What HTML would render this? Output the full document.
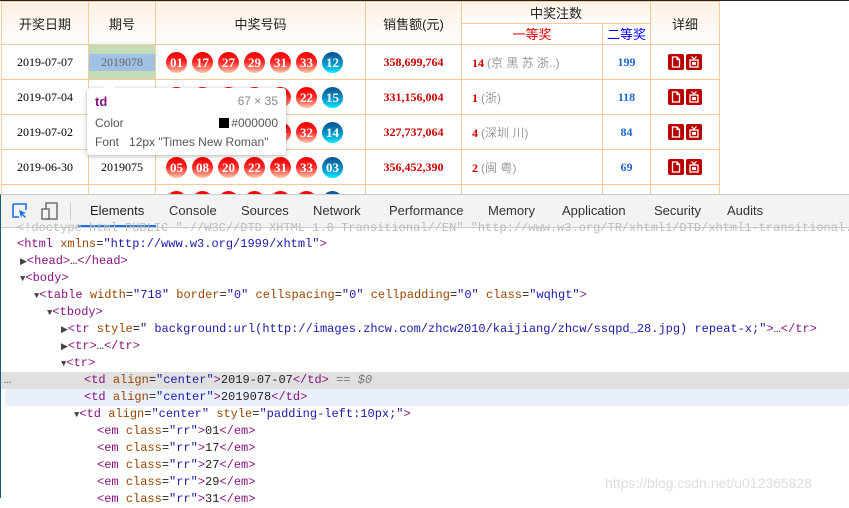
<!DOCTYPE html>
<html><head><meta charset="utf-8"><style>
body{margin:0;width:849px;height:498px;overflow:hidden;background:#fff;position:relative;font-family:"Liberation Sans","Noto Sans CJK SC",sans-serif}
.top{position:absolute;left:0;top:0;width:849px;height:194px;overflow:hidden;border-top:1px solid #222;box-sizing:border-box}
table{border-collapse:collapse;table-layout:fixed;position:absolute;left:1px;top:0;width:718px}
td{border:1px solid #f9c99a;text-align:center;font-family:"Liberation Serif","Noto Serif CJK SC",serif;font-size:12px;height:34px;padding:0;white-space:nowrap}
th{border:1px solid #f9c99a;font-weight:normal;font-size:13px;color:#222;background:linear-gradient(#fdf0e3,#fff);font-family:"Liberation Sans","Noto Sans CJK SC",sans-serif;padding:0}
.b{display:inline-block;width:21px;height:21px;border-radius:50%;color:#fff;font-weight:bold;font-size:13px;line-height:21px;text-align:center;margin-right:5px;vertical-align:middle;font-family:"Liberation Serif",serif}
.r{background:linear-gradient(#e00,#f22 45%,#f87 80%,#fca)}
.u{background:linear-gradient(#0a4f8f,#08a8d8 70%,#0ef)}
.sale{color:#c00;font-weight:bold}
.n1{color:#c00;font-weight:bold}
.g{color:#999;font-family:"Liberation Sans","Noto Sans CJK SC",sans-serif;font-size:12px}
.n2{color:#2266cc;font-weight:bold}
.ic{display:inline-block;width:16px;height:16px;margin:0 1px;vertical-align:middle}
.tip{position:absolute;left:87px;top:87px;width:199px;height:67px;background:#fff;border-radius:3px;box-shadow:0 1px 5px rgba(0,0,0,.3);font-size:12px;color:#555}
.tip:before{content:"";position:absolute;left:16px;top:-6px;border:6px solid transparent;border-top:0;border-bottom-color:#fff}
.dt{position:absolute;left:0;top:194px;width:849px;height:304px;border-top:1px solid #ccc;border-left:1px solid #1a5a7a;box-sizing:border-box}
.bar{height:32px;background:#f3f3f3;border-bottom:1px solid #ccc;position:relative;font-size:13px;color:#333}
.tab{position:absolute;top:8px}
.code{font-family:"Liberation Mono",monospace;font-size:12px;line-height:17px;color:#222;position:relative}
.ln{position:absolute;white-space:pre;height:17px}
.tg{color:#881280}.at{color:#994500}.av{color:#1a1aa6}.tr{color:#444;font-size:9px}
</style></head><body>
<svg width="0" height="0" style="position:absolute"><defs>
<symbol id="doc" viewBox="0 0 16 16"><rect width="16" height="16" rx="2" fill="#b80000"/><path d="M4.5 3h4.5l2.5 2.5V13h-7z M9 3v2.5h2.5" fill="none" stroke="#fff" stroke-width="1.3"/></symbol>
<symbol id="tv" viewBox="0 0 16 16"><rect width="16" height="16" rx="2" fill="#b80000"/><path d="M5.5 2.5l2.5 2.5 2.5-2.5" fill="none" stroke="#fff" stroke-width="1.2"/><rect x="4" y="6" width="8" height="7" fill="none" stroke="#fff" stroke-width="1.3"/><rect x="6" y="8" width="4" height="3" fill="#fff"/></symbol>
</defs></svg>
<div class="top">
<table>
<colgroup><col style="width:87px"><col style="width:67px"><col style="width:210px"><col style="width:96px"><col style="width:141px"><col style="width:48px"><col style="width:69px"></colgroup>
<tr style="height:21px"><th rowspan="2" style="height:42px">开奖日期</th><th rowspan="2">期号</th><th rowspan="2">中奖号码</th><th rowspan="2">销售额(元)</th><th colspan="2">中奖注数</th><th rowspan="2">详细</th></tr>
<tr style="height:21px"><th style="color:#e00;background:#fff">一等奖</th><th style="color:#00f;background:#fff">二等奖</th></tr>
<tr><td>2019-07-07</td><td style="background:#c3ddb8"><div style="background:#9fc1e3;color:#666;height:17px;line-height:17px">2019078</div></td><td style="text-align:left;padding-left:10px"><span class="b r">01</span><span class="b r">17</span><span class="b r">27</span><span class="b r">29</span><span class="b r">31</span><span class="b r">33</span><span class="b u">12</span></td><td class="sale">358,699,764</td><td style="text-align:left;padding-left:10px"><span class="n1">14</span> <span class="g">(京 黑 苏 浙..)</span></td><td class="n2">199</td><td><svg class="ic"><use href="#doc"/></svg><svg class="ic"><use href="#tv"/></svg></td></tr>
<tr><td>2019-07-04</td><td>2019077</td><td style="text-align:left;padding-left:10px"><span class="b r">03</span><span class="b r">06</span><span class="b r">09</span><span class="b r">11</span><span class="b r">19</span><span class="b r">22</span><span class="b u">15</span></td><td class="sale">331,156,004</td><td style="text-align:left;padding-left:10px"><span class="n1">1</span> <span class="g">(浙)</span></td><td class="n2">118</td><td><svg class="ic"><use href="#doc"/></svg><svg class="ic"><use href="#tv"/></svg></td></tr>
<tr><td>2019-07-02</td><td>2019076</td><td style="text-align:left;padding-left:10px"><span class="b r">02</span><span class="b r">05</span><span class="b r">10</span><span class="b r">14</span><span class="b r">26</span><span class="b r">32</span><span class="b u">14</span></td><td class="sale">327,737,064</td><td style="text-align:left;padding-left:10px"><span class="n1">4</span> <span class="g">(深圳 川)</span></td><td class="n2">84</td><td><svg class="ic"><use href="#doc"/></svg><svg class="ic"><use href="#tv"/></svg></td></tr>
<tr><td>2019-06-30</td><td>2019075</td><td style="text-align:left;padding-left:10px"><span class="b r">05</span><span class="b r">08</span><span class="b r">20</span><span class="b r">22</span><span class="b r">31</span><span class="b r">33</span><span class="b u">03</span></td><td class="sale">356,452,390</td><td style="text-align:left;padding-left:10px"><span class="n1">2</span> <span class="g">(闽 粤)</span></td><td class="n2">69</td><td><svg class="ic"><use href="#doc"/></svg><svg class="ic"><use href="#tv"/></svg></td></tr>
<tr><td></td><td></td><td style="text-align:left;padding-left:10px;vertical-align:top;padding-top:6px"><span class="b r"></span><span class="b r"></span><span class="b r"></span><span class="b r"></span><span class="b r"></span><span class="b r"></span><span class="b u"></span></td><td></td><td></td><td></td><td style="vertical-align:top;padding-top:9px"><svg class="ic"><use href="#doc"/></svg><svg class="ic"><use href="#tv"/></svg></td></tr>
</table>
<div class="tip">
<div style="position:absolute;left:8px;top:6px;color:#881280;font-weight:bold;font-size:13px">td</div>
<div style="position:absolute;right:8px;top:6px;color:#888">67 × 35</div>
<div style="position:absolute;left:8px;top:28px">Color</div>
<div style="position:absolute;right:8px;top:28px"><span style="display:inline-block;width:10px;height:10px;background:#000;vertical-align:-1px;margin-right:2px"></span>#000000</div>
<div style="position:absolute;left:8px;top:47px">Font&nbsp;&nbsp;&nbsp;12px "Times New Roman"</div>
</div>
</div>
<div class="dt">
<div class="bar">
<svg style="position:absolute;left:11px;top:8px" width="16" height="16"><path d="M1 1h13v6M1 1v13h6" fill="none" stroke="#1a73e8" stroke-width="1.6"/><path d="M7 7l7 3-3 1 3 3-1 1-3-3-1 3z" fill="#1a73e8"/></svg>
<svg style="position:absolute;left:40px;top:7px" width="18" height="18"><rect x="5" y="1" width="11" height="16" fill="none" stroke="#666" stroke-width="1.4"/><rect x="1" y="7" width="7" height="10" fill="#f3f3f3" stroke="#666" stroke-width="1.4"/></svg>
<div style="position:absolute;left:69px;top:7px;width:1px;height:18px;background:#ccc"></div>
<span class="tab" style="left:89px;color:#222">Elements</span>
<div style="position:absolute;left:77px;top:30px;width:78px;height:2px;background:#1a73e8"></div>
<span class="tab" style="left:168px">Console</span>
<span class="tab" style="left:240px">Sources</span>
<span class="tab" style="left:312px">Network</span>
<span class="tab" style="left:388px">Performance</span>
<span class="tab" style="left:487px">Memory</span>
<span class="tab" style="left:561px">Application</span>
<span class="tab" style="left:653px">Security</span>
<span class="tab" style="left:726px">Audits</span>
</div>
<div class="code">
<div class="ln" style="left:16px;top:-8px;color:#bbb">&lt;!doctype html PUBLIC "-//W3C//DTD XHTML 1.0 Transitional//EN" "http://www.w3.org/TR/xhtml1/DTD/xhtml1-transitional.dtd"&gt;</div>
<div class="ln" style="left:16px;top:8px"><span class="tg">&lt;html</span> <span class="at">xmlns</span>=<span class="av">"http://www.w3.org/1999/xhtml"</span><span class="tg">&gt;</span></div>
<div class="ln" style="left:19px;top:25px"><span class="tr">▶</span><span class="tg">&lt;head&gt;</span>…<span class="tg">&lt;/head&gt;</span></div>
<div class="ln" style="left:19px;top:42px"><span class="tr">▼</span><span class="tg">&lt;body&gt;</span></div>
<div class="ln" style="left:33px;top:59px"><span class="tr">▼</span><span class="tg">&lt;table</span> <span class="at">width</span>=<span class="av">"718"</span> <span class="at">border</span>=<span class="av">"0"</span> <span class="at">cellspacing</span>=<span class="av">"0"</span> <span class="at">cellpadding</span>=<span class="av">"0"</span> <span class="at">class</span>=<span class="av">"wqhgt"</span><span class="tg">&gt;</span></div>
<div class="ln" style="left:46px;top:76px"><span class="tr">▼</span><span class="tg">&lt;tbody&gt;</span></div>
<div class="ln" style="left:60px;top:93px"><span class="tr">▶</span><span class="tg">&lt;tr</span> <span class="at">style</span>=<span class="av">" background:url(http://images.zhcw.com/zhcw2010/kaijiang/zhcw/ssqpd_28.jpg) repeat-x;"</span><span class="tg">&gt;</span>…<span class="tg">&lt;/tr&gt;</span></div>
<div class="ln" style="left:60px;top:110px"><span class="tr">▶</span><span class="tg">&lt;tr&gt;</span>…<span class="tg">&lt;/tr&gt;</span></div>
<div class="ln" style="left:60px;top:127px"><span class="tr">▼</span><span class="tg">&lt;tr&gt;</span></div>
<div style="position:absolute;left:0;top:144px;width:848px;height:17px;background:#e0e0e0"></div>
<div class="ln" style="left:3px;top:144px;color:#666">…</div>
<div class="ln" style="left:83px;top:144px"><span class="tg">&lt;td</span> <span class="at">align</span>=<span class="av">"center"</span><span class="tg">&gt;</span>2019-07-07<span class="tg">&lt;/td&gt;</span> <span style="color:#777;font-style:italic">== $0</span></div>
<div style="position:absolute;left:4px;top:161px;width:844px;height:17px;background:#eaf0fb;border-radius:3px"></div>
<div class="ln" style="left:83px;top:161px"><span class="tg">&lt;td</span> <span class="at">align</span>=<span class="av">"center"</span><span class="tg">&gt;</span>2019078<span class="tg">&lt;/td&gt;</span></div>
<div class="ln" style="left:73px;top:178px"><span class="tr">▼</span><span class="tg">&lt;td</span> <span class="at">align</span>=<span class="av">"center"</span> <span class="at">style</span>=<span class="av">"padding-left:10px;"</span><span class="tg">&gt;</span></div>
<div class="ln" style="left:96px;top:195px"><span class="tg">&lt;em</span> <span class="at">class</span>=<span class="av">"rr"</span><span class="tg">&gt;</span>01<span class="tg">&lt;/em&gt;</span></div>
<div class="ln" style="left:96px;top:212px"><span class="tg">&lt;em</span> <span class="at">class</span>=<span class="av">"rr"</span><span class="tg">&gt;</span>17<span class="tg">&lt;/em&gt;</span></div>
<div class="ln" style="left:96px;top:229px"><span class="tg">&lt;em</span> <span class="at">class</span>=<span class="av">"rr"</span><span class="tg">&gt;</span>27<span class="tg">&lt;/em&gt;</span></div>
<div class="ln" style="left:96px;top:246px"><span class="tg">&lt;em</span> <span class="at">class</span>=<span class="av">"rr"</span><span class="tg">&gt;</span>29<span class="tg">&lt;/em&gt;</span></div>
<div class="ln" style="left:96px;top:263px"><span class="tg">&lt;em</span> <span class="at">class</span>=<span class="av">"rr"</span><span class="tg">&gt;</span>31<span class="tg">&lt;/em&gt;</span></div>
<div class="ln" style="left:604px;top:245px;font-family:'Liberation Sans',sans-serif;font-size:14px;color:#ddd;line-height:20px;height:20px">https://blog.csdn.net/u012365828</div>
</div>
</div>
</body></html>
